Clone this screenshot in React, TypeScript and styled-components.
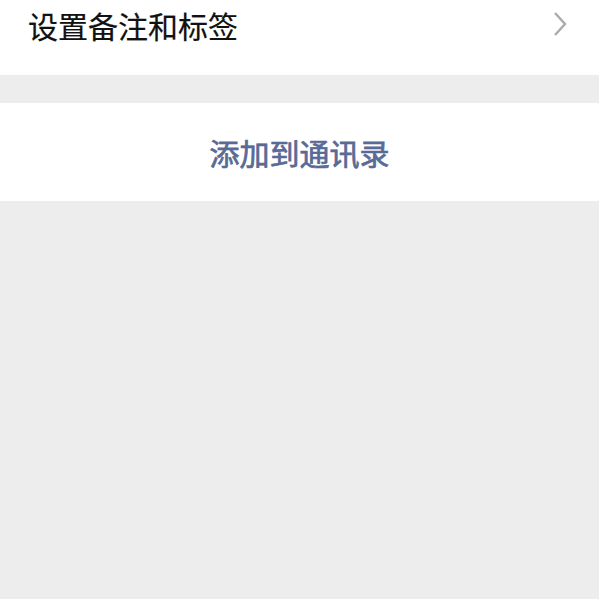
import React from "react";
import styled, { createGlobalStyle } from "styled-components";

const Global = createGlobalStyle`
  html, body { margin: 0; padding: 0; background: #ededed; }
  body { font-family: "Noto Sans CJK SC", "Noto Sans", sans-serif; }
`;

const Page = styled.div`
  width: 599px;
  height: 599px;
  background: #ededed;
  display: flex;
  flex-direction: column;
  overflow: hidden;
`;

const Cell = styled.div`
  background: #ffffff;
  height: 75px;
  box-sizing: border-box;
  padding: 10px 32px 0 28px;
  display: flex;
  align-items: flex-start;
  justify-content: space-between;
`;

const CellTitle = styled.span`
  font-size: 30px;
  line-height: 30px;
  color: #111111;
  -webkit-text-stroke: 0.2px #111111;
`;

const Chevron = styled.svg`
  width: 14px;
  height: 26px;
  margin-top: 1px;
`;

const Spacer = styled.div`
  height: 28px;
`;

const ActionButton = styled.div`
  background: #ffffff;
  height: 98px;
  display: flex;
  align-items: center;
  justify-content: center;
  font-size: 30px;
  font-weight: 400;
  color: #586a96;
  -webkit-text-stroke: 0.7px #586a96;
`;

export default function App() {
  return (
    <>
      <Global />
      <Page>
        <Cell>
          <CellTitle>设置备注和标签</CellTitle>
          <Chevron viewBox="0 0 14 26">
            <path d="M2 2 L12 13 L2 24" fill="none" stroke="#acacac" strokeWidth="2.5" />
          </Chevron>
        </Cell>
        <Spacer />
        <ActionButton>添加到通讯录</ActionButton>
      </Page>
    </>
  );
}
